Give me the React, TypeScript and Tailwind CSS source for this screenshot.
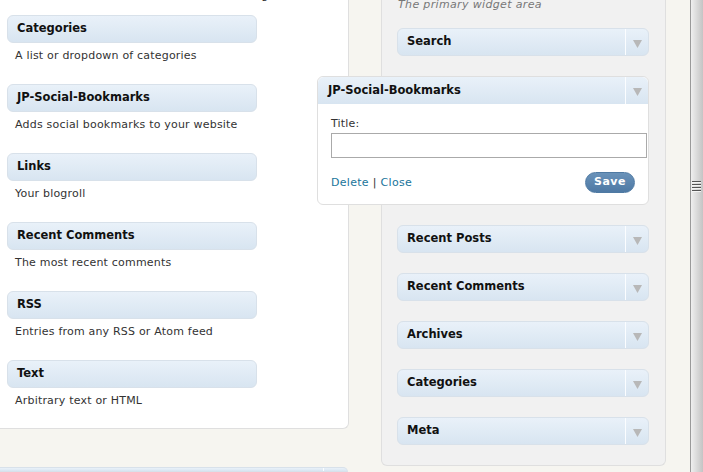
import React from 'react';

const available = [
  { title: 'Categories', description: 'A list or dropdown of categories' },
  { title: 'JP-Social-Bookmarks', description: 'Adds social bookmarks to your website' },
  { title: 'Links', description: 'Your blogroll' },
  { title: 'Recent Comments', description: 'The most recent comments' },
  { title: 'RSS', description: 'Entries from any RSS or Atom feed' },
  { title: 'Text', description: 'Arbitrary text or HTML' },
];

const sidebarAfter = ['Recent Posts', 'Recent Comments', 'Archives', 'Categories', 'Meta'];

function Arrow() {
  return (
    <svg width="9" height="8" viewBox="0 0 9 8" className="mt-[3px]">
      <polygon points="0,0 9,0 4.5,8" fill="#b8b8b8" />
    </svg>
  );
}

function SidebarWidget({ title }: { title: string }) {
  return (
    <div className="flex h-[28px] w-[252px] rounded-[6px] border border-[#d8e1ea] bg-gradient-to-b from-[#e9f1f9] to-[#d8e5f1]">
      <div className="flex flex-1 items-center pl-[9px] text-[11.5px] font-bold text-[#111]">{title}</div>
      <div className="flex w-[23px] items-center justify-center border-l border-[#fbfdff]">
        <Arrow />
      </div>
    </div>
  );
}

export default function App() {
  return (
    <div className="flex h-[472px] w-[703px] overflow-hidden bg-[#f6f5f0] font-['DejaVu_Sans',Verdana,sans-serif]">
      {/* available widgets */}
      <div className="flex w-[349px] flex-col">
        <div className="rounded-br-[6px] border-r border-b border-[#dfdfdf] bg-white pb-[20px] pl-[7px]">
          <p className="-mt-[11px] pl-[8px] text-[11px] leading-[14px] text-[#333]">
            Remove them and delete their current setting
          </p>
          <div className="mt-[12px] flex flex-col gap-[21px]">
            {available.map((w) => (
              <div key={w.title}>
                <div className="flex h-[28px] w-[250px] items-center rounded-[6px] border border-[#d8e1ea] bg-gradient-to-b from-[#e9f1f9] to-[#d8e5f1] pl-[9px] text-[11.5px] font-bold text-[#111]">
                  {w.title}
                </div>
                <p className="mt-[6px] pl-[8px] text-[11px] leading-[14px] tracking-[0.2px] text-[#333]">
                  {w.description}
                </p>
              </div>
            ))}
          </div>
        </div>
        <div className="mt-[38px] flex h-[20px] w-[348px] rounded-tr-[6px] border border-l-0 border-[#d8e1ea] bg-gradient-to-b from-[#e9f1f9] to-[#d8e5f1]">
          <div className="flex-1" />
          <div className="w-[24px] border-l border-[#fbfdff]" />
        </div>
      </div>

      {/* primary sidebar */}
      <div className="ml-[32px] w-[285px]">
        <div className="rounded-b-[6px] border border-t-0 border-[#dfdfdf] bg-[#f1f1f1] px-[15px] pb-[20px]">
          <p className="-mt-[2px] pl-[1px] text-[11px] italic leading-[14px] tracking-[0.35px] text-[#777]">
            The primary widget area
          </p>
          <div className="mt-[16px] flex flex-col gap-[20px]">
            <SidebarWidget title="Search" />

            <div className="-ml-[80px] w-[332px] rounded-[6px] border border-[#dfdfdf] bg-white">
              <div className="flex h-[27px] rounded-t-[6px] bg-gradient-to-b from-[#e9f1f9] to-[#d8e5f1]">
                <div className="flex flex-1 items-center pl-[10px] text-[11.5px] font-bold text-[#111]">
                  JP-Social-Bookmarks
                </div>
                <div className="flex w-[23px] items-center justify-center border-l border-[#fbfdff]">
                  <Arrow />
                </div>
              </div>
              <div className="pt-[13px] pr-[13px] pb-[11px] pl-[13px]">
                <label className="block text-[11px] leading-[14px] tracking-[0.2px] text-[#333]">Title:</label>
                <input
                  type="text"
                  className="mt-[2px] block h-[25px] w-[316px] border border-[#aaaaaa] bg-white"
                />
                <div className="mt-[14px] flex h-[21px] items-center justify-between">
                  <div className="text-[11px] leading-[14px] tracking-[0.3px] text-[#333]">
                    <span className="text-[#21759b]">Delete</span> | <span className="text-[#21759b]">Close</span>
                  </div>
                  <button className="h-[21px] w-[50px] rounded-full border border-[#4f7aa3] bg-gradient-to-b from-[#6a92b9] to-[#4e79a4] text-[11px] font-bold tracking-[0.5px] text-white">
                    Save
                  </button>
                </div>
              </div>
            </div>

            {sidebarAfter.map((t) => (
              <SidebarWidget key={t} title={t} />
            ))}
          </div>
        </div>
      </div>

      {/* frame splitter */}
      <div className="ml-[24px] flex w-[13px] flex-col border-l border-[#9a9a9a] bg-gradient-to-r from-[#efefef] to-[#c4c4c4]">
        <svg width="10" height="12" viewBox="0 0 10 12" className="mt-[180px] ml-[1px]">
          <rect x="0" y="1" width="9" height="1" fill="#555" />
          <rect x="0" y="4" width="9" height="1" fill="#555" />
          <rect x="0" y="7" width="9" height="1" fill="#555" />
          <rect x="0" y="10" width="9" height="1" fill="#555" />
          <rect x="0" y="2" width="9" height="1" fill="#f4f4f4" />
          <rect x="0" y="5" width="9" height="1" fill="#f4f4f4" />
          <rect x="0" y="8" width="9" height="1" fill="#f4f4f4" />
          <rect x="0" y="11" width="9" height="1" fill="#f4f4f4" />
        </svg>
      </div>
    </div>
  );
}
